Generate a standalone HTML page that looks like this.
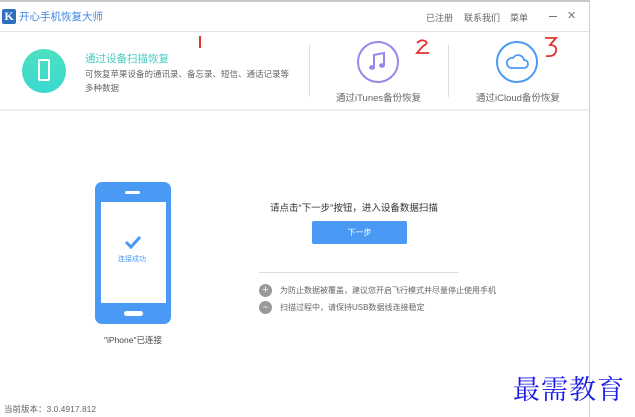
<!DOCTYPE html>
<html><head><meta charset="utf-8"><style>
*{margin:0;padding:0;box-sizing:border-box}
body{width:635px;height:417px;background:#fff;position:relative;overflow:hidden;font-family:"Liberation Sans","Noto Sans CJK SC",sans-serif;}
.a{position:absolute}
.win{left:0;top:0;width:590px;height:417px;border-right:1px solid #d0d0d0;border-top:2px solid #c8c8c8;}
.t{font-size:9px;color:#666;white-space:nowrap}
</style></head><body>
<div class="a win"></div>
<div class="a" style="left:2px;top:9px;width:14px;height:15px;background:#2f6fc0;border-radius:2px;color:#fff;font:bold 12px 'Liberation Serif',serif;text-align:center;line-height:15px">K</div>
<div class="a" style="left:19px;top:9px;font-size:10.5px;color:#3f86e6">开心手机恢复大师</div>
<div class="a t" style="left:426px;top:11px">已注册</div>
<div class="a t" style="left:464px;top:11px">联系我们</div>
<div class="a t" style="left:510px;top:11px">菜单</div>
<div class="a" style="left:549px;top:16px;width:8px;height:1px;background:#777"></div>
<div class="a" style="left:567px;top:9px;font-size:11px;color:#777">✕</div>
<div class="a" style="left:0;top:31px;width:589px;height:1px;background:#e3e3e3"></div>
<div class="a" style="left:22px;top:49px;width:44px;height:44px;border-radius:50%;background:linear-gradient(#4de0c0,#3ad8d0)"></div>
<div class="a" style="left:38px;top:59px;width:12px;height:22px;border:2px solid #fff;border-radius:2px"></div>
<div class="a" style="left:85px;top:51px;font-size:10.5px;color:#45cdc0">通过设备扫描恢复</div>
<div class="a t" style="left:85px;top:68px;font-size:8.5px">可恢复苹果设备的通讯录、备忘录、短信、通话记录等</div>
<div class="a t" style="left:85px;top:82px;font-size:8.5px">多种数据</div>
<div class="a" style="left:199px;top:36px;width:2px;height:12px;background:#e53030"></div>
<div class="a" style="left:309px;top:45px;width:1px;height:52px;background:#ddd"></div>
<div class="a" style="left:357px;top:41px;width:42px;height:42px;border-radius:50%;border:2px solid #9b84ea"></div>
<svg class="a" style="left:365px;top:49px" width="26" height="26" viewBox="0 0 26 26"><path d="M9 18V6l10-2v12" stroke="#9b84ea" stroke-width="2" fill="none"/><ellipse cx="7" cy="18.5" rx="3" ry="2.3" fill="#9b84ea"/><ellipse cx="17" cy="16.5" rx="3" ry="2.3" fill="#9b84ea"/></svg>
<svg class="a" style="left:415px;top:39px" width="16" height="16" viewBox="0 0 16 16"><path d="M2 4q4-4 8-2t-2 5l-6 7h12" stroke="#e53030" stroke-width="1.8" fill="none"/></svg>
<div class="a t" style="left:336px;top:90px;font-size:9.5px">通过iTunes备份恢复</div>
<div class="a" style="left:448px;top:45px;width:1px;height:52px;background:#ddd"></div>
<div class="a" style="left:496px;top:41px;width:42px;height:42px;border-radius:50%;border:2px solid #4a9af5"></div>
<svg class="a" style="left:503px;top:50px" width="28" height="24" viewBox="0 0 28 24"><path d="M8 18h13a4 4 0 0 0 0-8 6 6 0 0 0-11-2 5 5 0 0 0-2 10z" stroke="#4a9af5" stroke-width="1.8" fill="none"/></svg>
<svg class="a" style="left:543px;top:36px" width="16" height="22" viewBox="0 0 16 22"><path d="M2 2h11l-6 7q7 0 6 6t-10 5" stroke="#e53030" stroke-width="1.8" fill="none"/></svg>
<div class="a t" style="left:476px;top:90px;font-size:9.5px">通过iCloud备份恢复</div>
<div class="a" style="left:0;top:109px;width:589px;height:2px;background:#efefef"></div>
<div class="a" style="left:95px;top:182px;width:76px;height:142px;background:#4a9af5;border-radius:7px"></div>
<div class="a" style="left:101px;top:202px;width:65px;height:101px;background:#fff"></div>
<div class="a" style="left:125px;top:191px;width:15px;height:3px;background:#fff;border-radius:2px"></div>
<div class="a" style="left:124px;top:311px;width:19px;height:5px;background:#fff;border-radius:3px"></div>
<svg class="a" style="left:124px;top:235px" width="18" height="14" viewBox="0 0 18 14"><path d="M2 7l5 5 9-10" stroke="#4a9af5" stroke-width="3" fill="none"/></svg>
<div class="a" style="left:118px;top:254px;font-size:7px;color:#4a9af5">连接成功</div>
<div class="a t" style="left:104px;top:334px;font-size:8.5px;color:#444">"iPhone"已连接</div>
<div class="a t" style="left:270px;top:200px;font-size:9.5px;color:#333">请点击“下一步”按钮，进入设备数据扫描</div>
<div class="a" style="left:312px;top:221px;width:95px;height:23px;background:#4a9af5;border-radius:2px;color:#fff;font-size:8px;text-align:center;line-height:23px">下一步</div>
<div class="a" style="left:259px;top:272px;width:200px;height:1px;background:#ddd"></div>
<div class="a" style="left:259px;top:284px;width:13px;height:13px;border-radius:50%;background:#999;color:#fff;font-size:11px;line-height:13px;text-align:center">+</div>
<div class="a t" style="left:280px;top:285px;font-size:8px">为防止数据被覆盖，建议您开启飞行模式并尽量停止使用手机</div>
<div class="a" style="left:259px;top:301px;width:13px;height:13px;border-radius:50%;background:#999;color:#fff;font-size:9px;line-height:13px;text-align:center">~</div>
<div class="a t" style="left:280px;top:302px;font-size:8px">扫描过程中，请保持USB数据线连接稳定</div>
<div class="a t" style="left:4px;top:403px;font-size:8.5px">当前版本：3.0.4917.812</div>
<div class="a" style="left:513px;top:368px;font-size:27px;color:#1a1ae8;font-family:'Noto Serif CJK SC',serif;letter-spacing:1px;white-space:nowrap">最需教育</div>
</body></html>
